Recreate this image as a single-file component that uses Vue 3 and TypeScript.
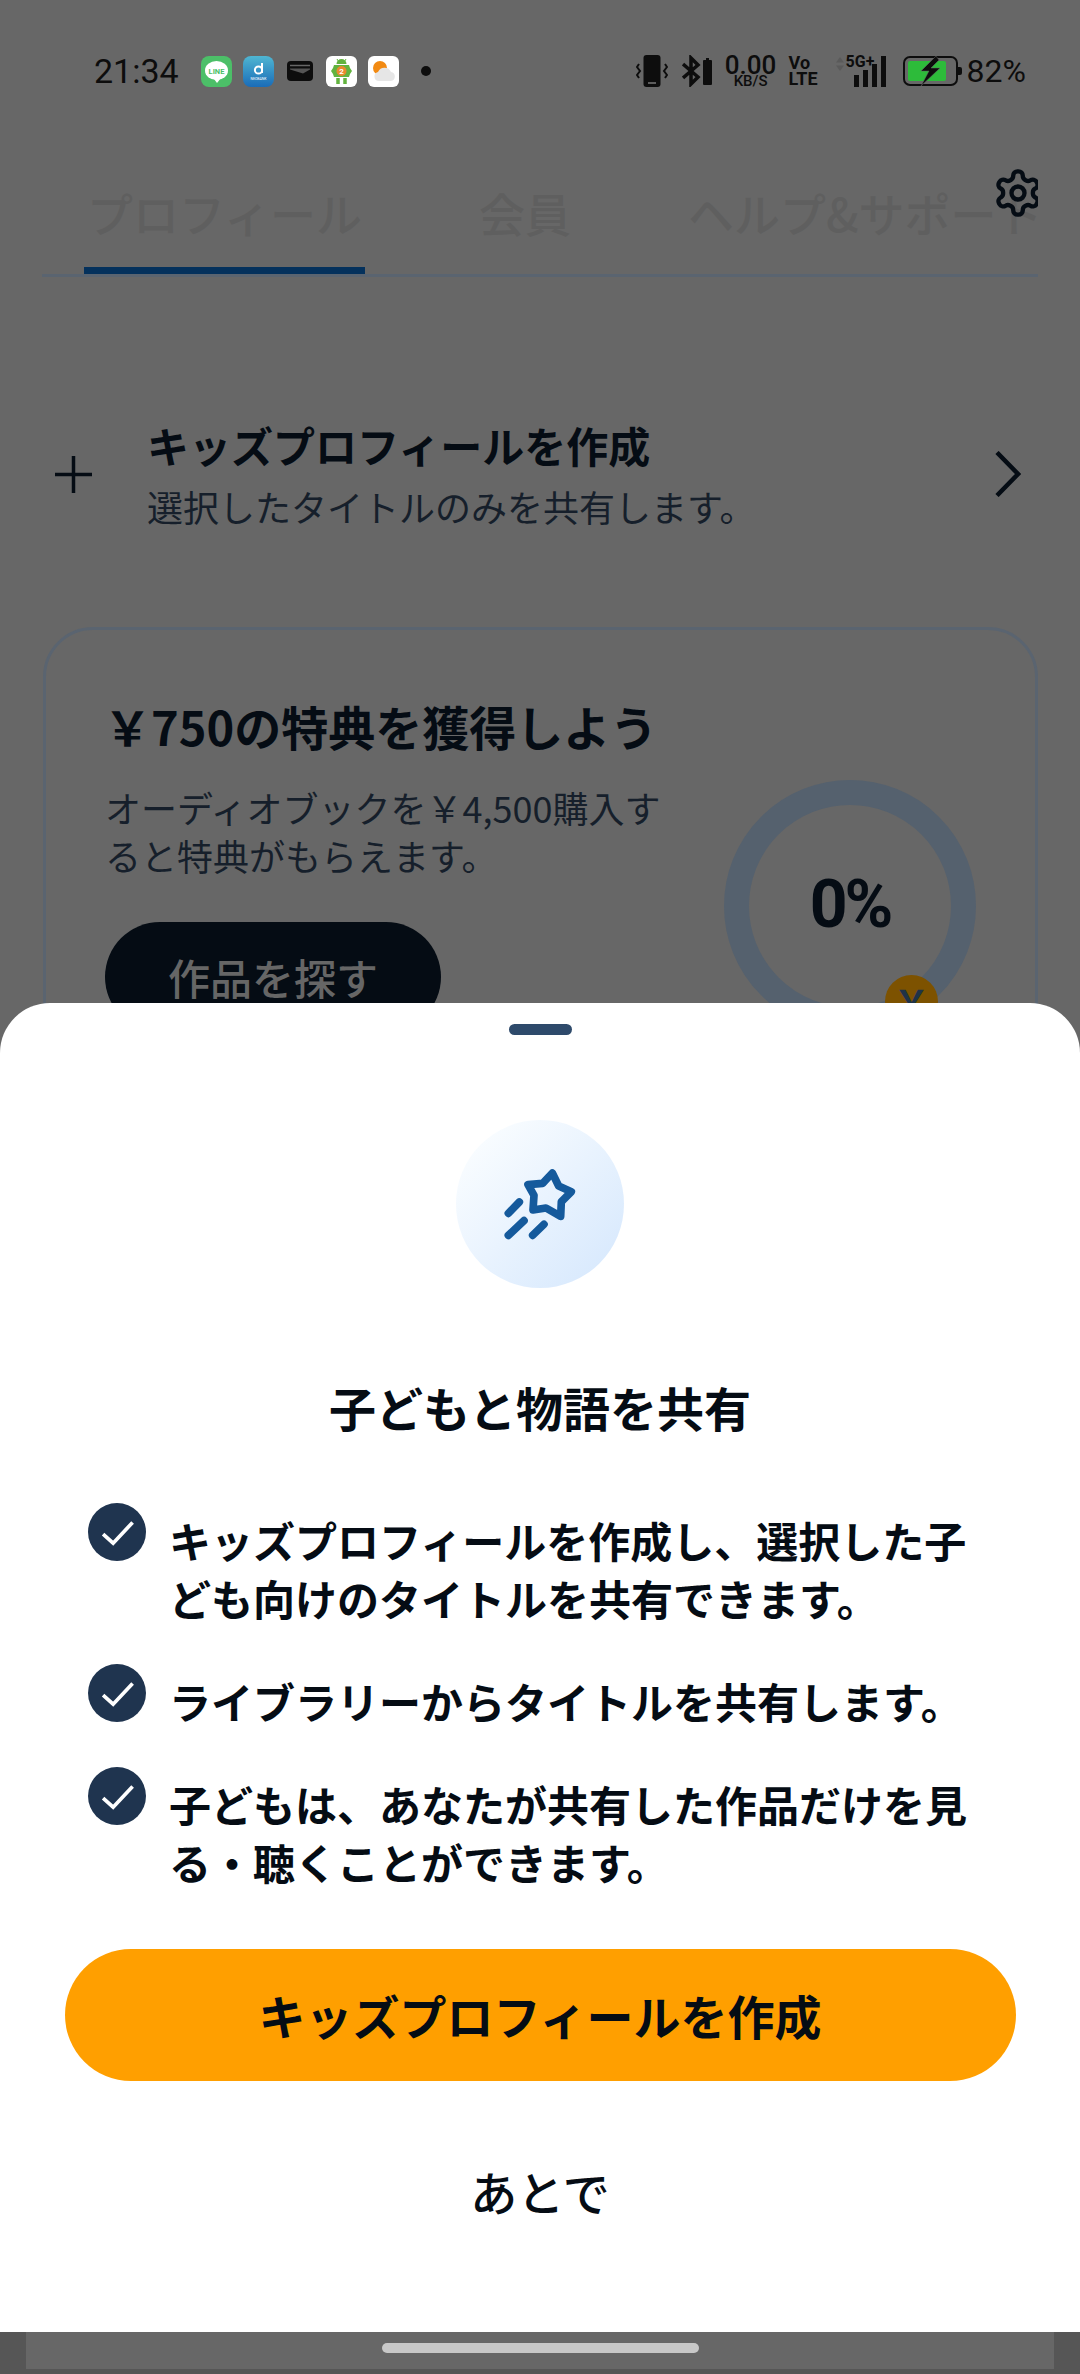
<script setup lang="ts">
const tabs = ['プロフィール', '会員', 'ヘルプ&サポート']
const points = [
  'キッズプロフィールを作成し、選択した子ども向けのタイトルを共有できます。',
  'ライブラリーからタイトルを共有します。',
  '子どもは、あなたが共有した作品だけを見る・聴くことができます。',
]
const bars = [12, 17, 23, 31]
</script>

<template>
  <div class="page">
    <div class="status">
      <span class="time">21:34</span>
      <div class="apps">
        <svg class="app" viewBox="0 0 31 31">
          <rect width="31" height="31" rx="8" fill="#4cbf68" />
          <ellipse cx="15.5" cy="14.5" rx="11.5" ry="9.5" fill="#fff" />
          <path d="M13 23l3 4 4-5z" fill="#fff" />
          <text x="15.5" y="17.5" text-anchor="middle" class="line-text">LINE</text>
        </svg>
        <svg class="app" viewBox="0 0 31 31">
          <defs>
            <linearGradient id="neo" x1="0" y1="0" x2="0" y2="1">
              <stop offset="0" stop-color="#4fb6d2" />
              <stop offset="1" stop-color="#1a6cb8" />
            </linearGradient>
          </defs>
          <rect width="31" height="31" rx="8" fill="url(#neo)" />
          <circle cx="15.5" cy="14" r="3.6" fill="none" stroke="#fff" stroke-width="2" />
          <path d="M19 7v10" stroke="#fff" stroke-width="2" />
          <text x="15.5" y="24" text-anchor="middle" class="neo-text">NEOBANK</text>
        </svg>
        <svg class="wallet" viewBox="0 0 26 20">
          <rect width="26" height="20" rx="4" fill="#0d0d0d" />
          <path d="M3 4.500h20" stroke="#666" stroke-width="1.500" />
          <path d="M3 7.500h20v1l-7 4-13-4z" fill="#555" />
        </svg>
        <svg class="app" viewBox="0 0 31 31">
          <rect width="31" height="31" rx="6" fill="#fff" />
          <path d="M10.500 8a5 5 0 0 1 10 0z" fill="#62b33e" />
          <path d="M11 3l1.500 2.500M20 3l-1.500 2.500" stroke="#62b33e" stroke-width="1" />
          <path d="M8 9h15l1 3 2 3-2 3-1 3H8l-1-3-2-3 2-3z" fill="#62b33e" />
          <circle cx="15.500" cy="15" r="5" fill="#e98a2e" />
          <text x="15.500" y="18" text-anchor="middle" class="badge-text">2</text>
          <path d="M12 22v6M19 22v6" stroke="#62b33e" stroke-width="3.500" />
        </svg>
        <svg class="app" viewBox="0 0 31 31">
          <rect width="31" height="31" rx="6" fill="#fff" />
          <circle cx="12" cy="12" r="7" fill="#f28a12" />
          <path d="M11 25a4.500 4.500 0 0 1-1-8.900 7 7 0 0 1 13 0 4.500 4.500 0 0 1 0 8.900z" fill="#e6e6e6" />
        </svg>
        <span class="dot"></span>
      </div>
      <div class="sys">
        <svg class="vib" viewBox="0 0 32 32">
          <rect x="7.500" y="0" width="17" height="32" rx="3" fill="#0d0d0d" />
          <path d="M12 28h8" stroke="#777" stroke-width="1.500" />
          <path d="M3 9L1 12l3 4-3 4 2 3M29 9l2 3-3 4 3 4-2 3" fill="none" stroke="#0d0d0d" stroke-width="2" />
        </svg>
        <svg class="bt" viewBox="0 0 32 32">
          <path d="M1 9l15 13-7 7V3l7 7L1 23" fill="none" stroke="#0d0d0d" stroke-width="3.500" />
          <path d="M22 5h2V3h3v2h2a1 1 0 0 1 1 1v23a1 1 0 0 1-1 1h-7a1 1 0 0 1-1-1V6a1 1 0 0 1 1-1z" fill="#0d0d0d" />
        </svg>
        <div class="speed">
          <span class="speed-num">0.00</span>
          <span class="speed-unit">KB/S</span>
        </div>
        <div class="volte">
          <span>Vo</span>
          <span>LTE</span>
        </div>
        <div class="signal">
          <svg class="updown" viewBox="0 0 10 14">
            <path d="M5 0l4 5.500H1zM5 14l4-5.500H1z" fill="#5a5a5a" />
          </svg>
          <span class="fiveg">5G+</span>
          <div class="bars">
            <i v-for="h in bars" :key="h" :style="{ height: h + 'px' }"></i>
          </div>
        </div>
        <svg class="batt" viewBox="0 0 59 30">
          <rect x="1" y="1" width="53" height="28" rx="6" fill="none" stroke="#0d0d0d" stroke-width="2" />
          <rect x="5" y="5" width="38" height="20" rx="2" fill="#2dbb3a" />
          <path d="M55 11h2a2 2 0 0 1 2 2v4a2 2 0 0 1-2 2h-2z" fill="#0d0d0d" />
          <path d="M33 0L18 15h8l-8 15 19-18h-9l8-8z" fill="#0d0d0d" stroke="#676767" stroke-width=".5" />
        </svg>
        <span class="pct">82%</span>
      </div>
    </div>

    <div class="tabs">
      <div v-for="(t, i) in tabs" :key="t" class="tab" :class="{ on: i === 0 }">{{ t }}</div>
      <svg class="gear" viewBox="0 0 24 24" fill="none" stroke="#050c14" stroke-width="2" stroke-linecap="round" stroke-linejoin="round">
        <path d="M12.220 2h-.44a2 2 0 0 0-2 2v.18a2 2 0 0 1-1 1.730l-.43.25a2 2 0 0 1-2 0l-.15-.08a2 2 0 0 0-2.730.73l-.22.38a2 2 0 0 0 .73 2.730l.15.1a2 2 0 0 1 1 1.720v.51a2 2 0 0 1-1 1.740l-.15.09a2 2 0 0 0-.73 2.730l.22.38a2 2 0 0 0 2.730.73l.15-.08a2 2 0 0 1 2 0l.43.25a2 2 0 0 1 1 1.730V20a2 2 0 0 0 2 2h.44a2 2 0 0 0 2-2v-.18a2 2 0 0 1 1-1.730l.43-.25a2 2 0 0 1 2 0l.15.08a2 2 0 0 0 2.730-.73l.22-.39a2 2 0 0 0-.73-2.730l-.15-.08a2 2 0 0 1-1-1.740v-.5a2 2 0 0 1 1-1.740l.15-.09a2 2 0 0 0 .73-2.730l-.22-.38a2 2 0 0 0-2.730-.73l-.15.08a2 2 0 0 1-2 0l-.43-.25a2 2 0 0 1-1-1.730V4a2 2 0 0 0-2-2z" />
        <circle cx="12" cy="12" r="3" />
      </svg>
    </div>

    <div class="kids-row">
      <svg class="plus" viewBox="0 0 37 37">
        <path d="M18.500 0v37M0 18.500h37" stroke="#050c14" stroke-width="3.500" />
      </svg>
      <div class="kids-text">
        <div class="kids-title">キッズプロフィールを作成</div>
        <div class="kids-sub">選択したタイトルのみを共有します。</div>
      </div>
      <svg class="chev" viewBox="0 0 26 46">
        <path d="M2 1.500L23 23 2 44.500" fill="none" stroke="#050c14" stroke-width="4.500" />
      </svg>
    </div>

    <div class="reward">
      <div class="reward-left">
        <div class="reward-title">￥750の特典を獲得しよう</div>
        <div class="reward-desc">オーディオブックを￥4,500購入すると特典がもらえます。</div>
        <div class="reward-btn">作品を探す</div>
      </div>
      <div class="ring">
        <span class="ring-num">0%</span>
        <span class="ring-badge">￥</span>
      </div>
    </div>

    <div class="sheet">
      <div class="handle"></div>
      <div class="hero">
        <svg viewBox="78 90 504 504" fill="none" stroke="#155a9c" stroke-width="23" stroke-linecap="round" stroke-linejoin="round">
          <path d="M367 249L386 288L424 305L394 335L392 379L348 354L309 360L312 316L294 284L338 280Z" />
          <path d="M235 370L268 336M235 436L282 392M308 436L342 403" />
        </svg>
      </div>
      <h2 class="sheet-title">子どもと物語を共有</h2>
      <ul class="points">
        <li v-for="p in points" :key="p">
          <svg class="check" viewBox="85 72 173 173">
            <circle cx="171.500" cy="158.500" r="86.500" fill="#1f344f" />
            <path d="M130 165L160 192L218 130" fill="none" stroke="#fff" stroke-width="11" />
          </svg>
          <span>{{ p }}</span>
        </li>
      </ul>
      <div class="cta">キッズプロフィールを作成</div>
      <div class="later">あとで</div>
    </div>

    <div class="navbar">
      <div class="nav-inner">
        <div class="pill"></div>
      </div>
    </div>
  </div>
</template>

<style scoped>
.page {
  position: relative;
  width: 1080px;
  height: 2374px;
  overflow: hidden;
  background: #676767;
  font-family: "Noto Sans CJK JP", "Noto Sans", sans-serif;
  color: #050c14;
}
.status {
  height: 142px;
  display: flex;
  align-items: center;
  padding: 0 54px 0 94px;
  box-sizing: border-box;
  font-family: Roboto, sans-serif;
  color: #0d0d0d;
}
.time {
  font-size: 34px;
  width: 107px;
}
.apps {
  display: flex;
  align-items: center;
  gap: 11px;
}
.app {
  width: 31px;
  height: 31px;
}
.wallet {
  width: 26px;
  height: 20px;
  margin: 0 2px;
}
.dot {
  width: 10px;
  height: 10px;
  border-radius: 50%;
  background: #0d0d0d;
  margin-left: 11px;
}
.line-text {
  font: 700 7.500px Roboto, sans-serif;
  fill: #4cbf68;
}
.neo-text {
  font: 400 3.500px Roboto, sans-serif;
  fill: #fff;
}
.badge-text {
  font: 700 8px Roboto, sans-serif;
  fill: #fff;
}
.sys {
  margin-left: auto;
  display: flex;
  align-items: center;
}
.vib {
  width: 32px;
  height: 32px;
}
.bt {
  width: 32px;
  height: 32px;
  margin-left: 14px;
}
.speed {
  display: flex;
  flex-direction: column;
  align-items: center;
  margin-left: 11px;
  width: 52px;
  line-height: 1;
}
.speed-num {
  font-size: 26px;
  font-weight: 500;
  height: 20px;
  line-height: 20px;
}
.speed-unit {
  font-size: 15px;
  font-weight: 500;
  height: 13px;
  line-height: 13px;
}
.volte {
  display: flex;
  flex-direction: column;
  margin-left: 12px;
  width: 30px;
  font-size: 18px;
  font-weight: 700;
  line-height: 16px;
}
.signal {
  position: relative;
  width: 54px;
  height: 32px;
  margin-left: 14px;
}
.updown {
  position: absolute;
  left: 2px;
  top: 2px;
  width: 10px;
  height: 14px;
}
.fiveg {
  position: absolute;
  left: 13px;
  top: -3px;
  font-size: 16px;
  font-weight: 700;
}
.bars {
  position: absolute;
  left: 21px;
  bottom: 0;
  display: flex;
  align-items: flex-end;
  gap: 4.300px;
}
.bars i {
  display: block;
  width: 5px;
  background: #0d0d0d;
}
.batt {
  width: 59px;
  height: 30px;
  margin-left: 16px;
}
.pct {
  font-size: 32px;
  margin-left: 5px;
}
.tabs {
  position: relative;
  height: 135px;
  margin: 0 42px;
  padding-left: 42px;
  display: flex;
  align-items: flex-end;
  gap: 111px;
  border-bottom: 3px solid #5a6470;
  box-sizing: border-box;
  overflow: hidden;
  white-space: nowrap;
}
.tab {
  flex: none;
  height: 125px;
  padding: 33px 3px 0;
  box-sizing: border-box;
  font-size: 46px;
  font-weight: 500;
  line-height: 60px;
  color: #5f5f5f;
}
.tab.on {
  border-bottom: 7px solid #04315c;
  border-radius: 6px 6px 0 0;
}
.gear {
  position: absolute;
  right: -6px;
  top: 25px;
  width: 52px;
  height: 52px;
}
.kids-row {
  display: flex;
  align-items: center;
  margin-top: 137px;
  padding: 0 59px 0 55px;
}
.plus {
  flex: none;
  width: 37px;
  height: 37px;
  margin: -3px 55px 0 0;
}
.kids-text {
  flex: 1;
}
.kids-title {
  font-size: 42px;
  font-weight: 700;
  line-height: 62px;
}
.kids-sub {
  margin-top: -1px;
  font-size: 36px;
  line-height: 62px;
  color: #161f2b;
}
.chev {
  flex: none;
  width: 26px;
  height: 46px;
  margin-top: -3px;
}
.reward {
  display: flex;
  height: 520px;
  margin: 90px 42px 0 43px;
  padding: 66px 59px 0;
  box-sizing: border-box;
  border: 3px solid #5a6470;
  border-radius: 50px;
}
.reward-left {
  width: 560px;
}
.reward-title {
  font-size: 47px;
  font-weight: 700;
  line-height: 60px;
  margin-left: -1px;
}
.reward-desc {
  margin-top: 27px;
  font-size: 36px;
  line-height: 48px;
  color: #161f2b;
}
.reward-btn {
  width: 336px;
  height: 110px;
  margin-top: 43px;
  border-radius: 55px;
  background: #050c14;
  color: #666;
  font-size: 42px;
  font-weight: 500;
  line-height: 110px;
  text-align: center;
}
.ring {
  position: relative;
  flex: none;
  width: 252px;
  height: 252px;
  margin: 84px 0 0 auto;
  border: 25px solid #55616e;
  border-radius: 50%;
  box-sizing: border-box;
  display: flex;
  align-items: center;
  justify-content: center;
}
.ring-num {
  margin-bottom: 4px;
  font-family: Roboto, sans-serif;
  font-size: 66px;
  font-weight: 700;
  letter-spacing: -3px;
}
.ring-badge {
  position: absolute;
  left: 136px;
  top: 170px;
  width: 53px;
  height: 53px;
  border-radius: 50%;
  background: #7d5200;
  text-align: center;
  font-size: 36px;
  font-weight: 700;
  line-height: 53px;
  color: #1f3347;
}
.sheet {
  position: absolute;
  left: 0;
  right: 0;
  top: 1003px;
  height: 1329px;
  background: #fff;
  border-radius: 50px 50px 0 0;
  display: flex;
  flex-direction: column;
  align-items: center;
}
.handle {
  width: 63px;
  height: 11px;
  margin-top: 21px;
  border-radius: 6px;
  background: #2e4a6b;
}
.hero {
  width: 168px;
  height: 168px;
  margin-top: 85px;
  border-radius: 50%;
  background: linear-gradient(135deg, #fafdff 10%, #d8e9fd 90%);
}
.hero svg {
  display: block;
  width: 168px;
  height: 168px;
}
.sheet-title {
  margin: 87px 0 0;
  font-size: 47px;
  font-weight: 700;
  line-height: 64px;
}
.points {
  list-style: none;
  margin: 64px 0 0;
  padding: 0 0 0 88px;
  width: 100%;
  box-sizing: border-box;
}
.points li {
  display: flex;
  align-items: flex-start;
  margin-bottom: 37px;
}
.points li span {
  width: 800px;
  margin: 8px 0 0 23px;
  font-size: 42px;
  font-weight: 700;
  line-height: 58px;
}
.check {
  flex: none;
  width: 58px;
  height: 58px;
}
.cta {
  width: 951px;
  height: 132px;
  margin-top: 21px;
  border-radius: 66px;
  background: #ff9f00;
  font-size: 47px;
  font-weight: 700;
  line-height: 132px;
  text-align: center;
}
.later {
  margin-top: 78px;
  font-size: 47px;
  font-weight: 500;
  line-height: 64px;
}
.navbar {
  position: absolute;
  left: 0;
  right: 0;
  top: 2332px;
  height: 42px;
  padding: 0 26px 5px;
  box-sizing: border-box;
  background: #565656;
}
.nav-inner {
  height: 37px;
  background: #676767;
  padding-top: 11px;
  box-sizing: border-box;
}
.pill {
  width: 317px;
  height: 10px;
  margin: 0 auto;
  border-radius: 5px;
  background: #c8c8c8;
}
</style>
